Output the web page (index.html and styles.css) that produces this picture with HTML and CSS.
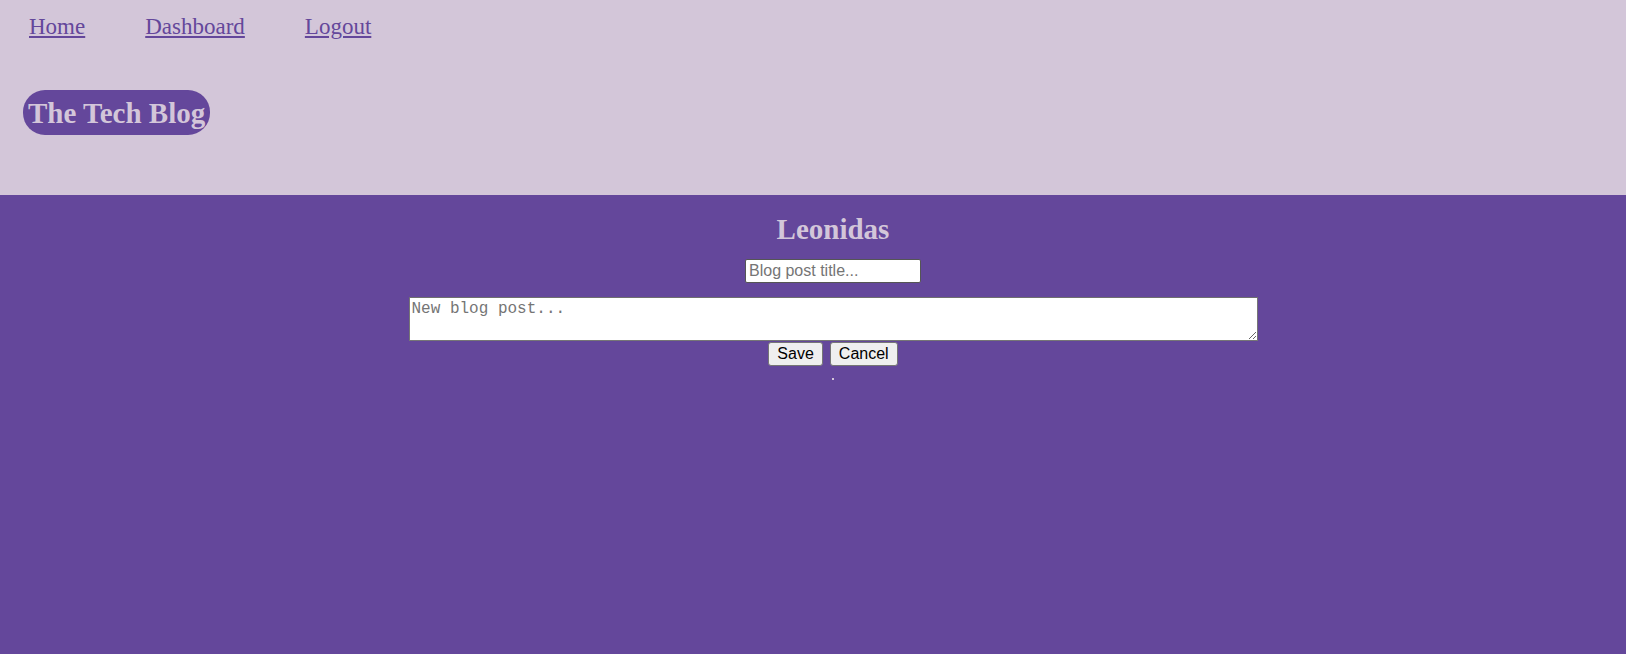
FILE: index.html
```html
<!DOCTYPE html>
<html lang="en">
<head>
<meta charset="utf-8">
<title>The Tech Blog</title>
<link rel="stylesheet" href="styles.css">
</head>
<body>
<header class="site-header">
  <nav class="nav">
    <a class="nav-link" href="#">Home</a>
    <a class="nav-link" href="#">Dashboard</a>
    <a class="nav-link" href="#">Logout</a>
  </nav>
  <h1 class="logo">The Tech Blog</h1>
</header>
<main class="main">
  <h2 class="user-name">Leonidas</h2>
  <form class="post-form">
    <input class="title-input" type="text" placeholder="Blog post title...">
    <textarea class="body-input" placeholder="New blog post..."></textarea>
    <div class="actions">
      <button class="btn" type="button">Save</button>
      <button class="btn" type="button">Cancel</button>
    </div>
    <span class="dot"></span>
  </form>
</main>
</body>
</html>
```

FILE: styles.css
```css
html, body {
  margin: 0;
  padding: 0;
  background: #64479b;
  font-family: "Liberation Serif", "Times New Roman", serif;
}

.site-header {
  background: #d3c6d9;
  height: 195px;
  box-sizing: border-box;
  padding-top: 14px;
}

.nav {
  display: flex;
  gap: 60px;
  padding-left: 29px;
  height: 26px;
}

.nav-link {
  font-size: 23px;
  line-height: 26px;
  color: #64479b;
  text-decoration: underline;
}

.logo {
  display: inline-block;
  margin: 50px 0 0 23px;
  padding: 6px 5px 5px;
  font-size: 29px;
  line-height: 34px;
  font-weight: bold;
  color: #d3c6d9;
  background: #64479b;
  border-radius: 22px;
}

.main {
  padding: 17px 0 0 40px;
  text-align: center;
}

.user-name {
  margin: 0;
  font-size: 29px;
  line-height: 34px;
  font-weight: bold;
  color: #d3c6d9;
}

.post-form {
  display: flex;
  flex-direction: column;
  align-items: center;
  margin-top: 13px;
}

.title-input {
  box-sizing: border-box;
  width: 176px;
  height: 24px;
  margin: 0;
  padding: 1px 3px;
  font-family: "Liberation Sans", Arial, sans-serif;
  font-size: 16px;
  background: #fff;
  border: 1px solid #555;
  border-radius: 2px;
}

.title-input::placeholder,
.body-input::placeholder {
  color: #757575;
}

.body-input {
  box-sizing: border-box;
  width: 849px;
  height: 44px;
  margin: 14px 0 0;
  padding: 2px;
  font-family: "Liberation Mono", "Courier New", monospace;
  font-size: 16px;
  background: #fff;
  border: 1px solid #767676;
  border-top-color: #6f6f6f;
}

.actions {
  display: flex;
  gap: 7px;
  margin-top: 1px;
}

.btn {
  box-sizing: border-box;
  height: 24px;
  margin: 0;
  padding: 1px 8px;
  font-family: "Liberation Sans", Arial, sans-serif;
  font-size: 16px;
  line-height: 20px;
  color: #000;
  background: #efefef;
  border: 1px solid #767676;
  border-radius: 3px;
}

.dot {
  width: 2px;
  height: 2px;
  margin-top: 12px;
  background: #d3c6d9;
}
```
